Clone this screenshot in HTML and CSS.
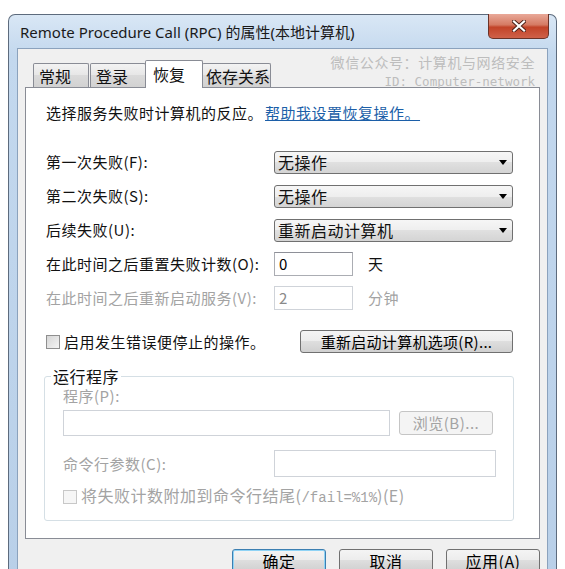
FILE: index.html
```html
<!DOCTYPE html>
<html lang="zh-CN">
<head>
  <meta charset="UTF-8">
  <title>Remote Procedure Call (RPC) 的属性(本地计算机)</title>
  <link rel="stylesheet" href="styles.css">
</head>
<body>
  <div class="window">
    <div class="titlebar">
      <span class="title">Remote Procedure Call (RPC) 的属性(本地计算机)</span>
      <span class="close">
        <svg width="14" height="12" viewBox="0 0 14 12">
          <path d="M2 1.5 L12 10.5 M12 1.5 L2 10.5" stroke="#4a2018" stroke-width="4" stroke-linecap="square"/>
          <path d="M2 1.5 L12 10.5 M12 1.5 L2 10.5" stroke="#fff" stroke-width="2.2" stroke-linecap="square"/>
        </svg>
      </span>
    </div>

    <div class="client">
      <div class="watermark">
        <div>微信公众号：计算机与网络安全</div>
        <div class="mono">ID: Computer-network</div>
      </div>

      <div class="tabs">
        <span class="tab">常规</span>
        <span class="tab">登录</span>
        <span class="tab active">恢复</span>
        <span class="tab">依存关系</span>
      </div>

      <div class="panel">
        <p class="intro">选择服务失败时计算机的反应。<a href="#">帮助我设置恢复操作。</a></p>

        <div class="form">
          <div class="row">
            <span class="label">第一次失败(F):</span>
            <div class="select">无操作</div>
          </div>
          <div class="row">
            <span class="label">第二次失败(S):</span>
            <div class="select">无操作</div>
          </div>
          <div class="row">
            <span class="label">后续失败(U):</span>
            <div class="select">重新启动计算机</div>
          </div>
          <div class="row">
            <span class="label">在此时间之后重置失败计数(O):</span>
            <div class="input small">0</div>
            <span class="unit">天</span>
          </div>
          <div class="row disabled">
            <span class="label">在此时间之后重新启动服务(V):</span>
            <div class="input small">2</div>
            <span class="unit">分钟</span>
          </div>
        </div>

        <div class="check-row">
          <span class="checkbox"></span>
          <span>启用发生错误便停止的操作。</span>
          <span class="button restart">重新启动计算机选项(R)...</span>
        </div>

        <fieldset class="group">
          <legend>运行程序</legend>
          <div class="disabled">程序(P):</div>
          <div class="program-row">
            <div class="input wide"></div>
            <span class="button browse">浏览(B)...</span>
          </div>
          <div class="row args disabled">
            <span class="label">命令行参数(C):</span>
            <div class="input args-input"></div>
          </div>
          <div class="fail-row disabled">
            <span class="checkbox off"></span>
            <span>将失败计数附加到命令行结尾(<span class="mono-inline">/fail=%1%</span>)(E)</span>
          </div>
        </fieldset>
      </div>

      <div class="buttons">
        <span class="button default">确定</span>
        <span class="button">取消</span>
        <span class="button">应用(A)</span>
      </div>
    </div>
  </div>
</body>
</html>
```

FILE: styles.css
```css
html, body {
  margin: 0;
  height: 569px;
  overflow: hidden;
}

body {
  background: #fff;
  font-family: "Noto Sans CJK SC", "Noto Sans", sans-serif;
  font-size: 15px;
  line-height: 20px;
  letter-spacing: 0.5px;
  color: #111;
}

.window {
  margin: 14px 0 0 8px;
  width: 549px;
  height: 600px;
  box-sizing: border-box;
  border: 1px solid #5d6b7d;
  border-bottom: none;
  border-radius: 7px 7px 0 0;
  padding: 0 8px;
  background: linear-gradient(#d9e7f5, #c3d8ee 40px, #b8cfe8);
}

.titlebar {
  display: flex;
  align-items: flex-start;
  height: 33px;
  margin: 0 -8px;
  padding-left: 11px;
  padding-right: 7px;
}

.title {
  margin-top: 7px;
  font-family: "Noto Sans", "Noto Sans CJK SC", sans-serif;
  font-size: 15px;
  letter-spacing: 0;
  color: #1a1a1a;
}

.close {
  margin-left: auto;
  margin-top: -1px;
  width: 61px;
  height: 25px;
  box-sizing: border-box;
  border: 1px solid #6b3328;
  border-top: none;
  border-radius: 0 0 5px 5px;
  background: linear-gradient(#e9a999, #d57a63 45%, #c24328 55%, #cf6149);
  display: flex;
  align-items: center;
  justify-content: center;
}

.client {
  position: relative;
  height: 560px;
  border: 1px solid #8ba2bd;
  background: #f0f0f0;
  padding: 11px 7px 0 7px;
}

.watermark {
  position: absolute;
  top: 4px;
  right: 12px;
  text-align: right;
  color: #bdbdbd;
  font-size: 14px;
  line-height: 19px;
  letter-spacing: 0.6px;
}

.mono {
  font-family: "DejaVu Sans Mono", "Liberation Mono", monospace;
  font-size: 12.5px;
  letter-spacing: 0;
}

.mono-inline {
  font-family: "Liberation Mono", monospace;
  font-size: 14px;
  letter-spacing: 0;
}

.tabs {
  position: relative;
  z-index: 1;
  display: flex;
  align-items: flex-end;
  height: 28px;
  margin-bottom: -1px;
  padding-left: 8px;
}

.tab {
  width: 56px;
  height: 24px;
  box-sizing: border-box;
  margin-bottom: 1px;
  margin-right: 1px;
  padding-left: 5px;
  border: 1px solid #898c95;
  border-bottom: none;
  border-radius: 2px 2px 0 0;
  background: linear-gradient(#f3f3f3, #e6e6e6 50%, #dadada 50%, #d2d2d2);
  font-size: 16px;
  line-height: 24px;
  letter-spacing: 0;
  white-space: nowrap;
}

.tab:last-child {
  width: 69px;
  padding-left: 3px;
}

.tab.active {
  width: 58px;
  height: 28px;
  margin: 0 -1px 0 -2px;
  padding-left: 7px;
  background: #fff;
  line-height: 26px;
}

.panel {
  width: 515px;
  box-sizing: border-box;
  border: 1px solid #898c95;
  background: #fff;
  padding: 15px 26px 17px 20px;
}

.intro {
  margin: 0 0 27px 0;
}

.intro a {
  margin-left: 2px;
  color: #1c5fa8;
}

.row {
  display: flex;
  align-items: center;
  height: 24px;
  margin-bottom: 10px;
}

.label {
  width: 228px;
  flex: none;
}

.select {
  flex: 1;
  height: 23px;
  box-sizing: border-box;
  display: flex;
  align-items: center;
  padding: 0 5px 0 3px;
  border: 1px solid #707070;
  border-radius: 3px;
  background: linear-gradient(#f6f6f6, #eeeeee 50%, #e0e0e0 50%, #d4d4d4);
  font-size: 16px;
}

.select::after {
  content: "";
  margin-left: auto;
  border-left: 4px solid transparent;
  border-right: 4px solid transparent;
  border-top: 5px solid #000;
}

.input {
  height: 24px;
  box-sizing: border-box;
  padding-left: 4px;
  border: 1px solid #abadb3;
  border-top-color: #8e9098;
  background: #fff;
  color: #000;
  line-height: 22px;
}

.input.small {
  width: 79px;
}

.unit {
  margin-left: 15px;
}

.disabled {
  color: #a3a3a3;
}

.disabled .input {
  border-color: #cfd3d9;
  color: #8a8a8a;
}

.check-row {
  display: flex;
  align-items: center;
  height: 23px;
  margin-top: 20px;
}

.checkbox {
  width: 14px;
  height: 14px;
  box-sizing: border-box;
  margin-right: 4px;
  border: 1px solid #8f8f8f;
  background: linear-gradient(135deg, #d6d6d6, #f4f4f4);
}

.checkbox.off {
  border-color: #c8c8c8;
  background: #f6f6f6;
}

.button {
  height: 23px;
  box-sizing: border-box;
  display: flex;
  align-items: center;
  justify-content: center;
  border: 1px solid #707070;
  border-radius: 3px;
  background: linear-gradient(#f4f4f4, #ececec 50%, #dedede 50%, #d0d0d0);
  color: #000;
}

.restart {
  width: 213px;
  margin-left: auto;
  letter-spacing: 0.3px;
}

.group {
  margin: 14px 0 0 -2px;
  width: 469px;
  box-sizing: border-box;
  padding: 1px 17px 12px 18px;
  border: 1px solid #d5dfe5;
  border-radius: 3px;
}

.group legend {
  margin-left: -12px;
  padding: 0 2px;
  font-size: 16px;
  line-height: 18px;
  color: #111;
}

.program-row {
  display: flex;
  align-items: center;
  margin-top: 4px;
}

.input.wide {
  width: 327px;
  height: 26px;
  border-color: #cfd3d9;
}

.browse {
  width: 94px;
  height: 24px;
  margin-left: 9px;
  border-color: #c5c5c5;
  background: #f4f4f4;
  color: #a3a3a3;
}

.row.args {
  height: 27px;
  margin: 14px 0 0 0;
}

.args .label {
  width: 211px;
}

.args-input {
  width: 222px;
  height: 27px;
}

.fail-row {
  display: flex;
  align-items: center;
  margin-top: 8px;
  font-size: 16px;
}

.buttons {
  display: flex;
  justify-content: flex-end;
  gap: 13px;
  margin-top: 10px;
}

.buttons .button {
  width: 94px;
  font-size: 16px;
}

.button.default {
  border-color: #3c7fb1;
  box-shadow: inset 0 0 0 1px #8fd3f5;
}
```
